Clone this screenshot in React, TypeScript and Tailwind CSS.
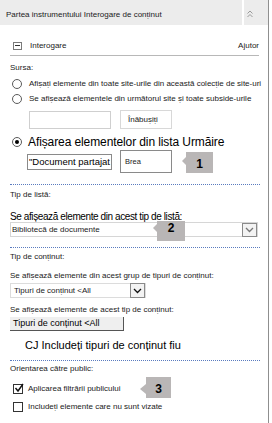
import React from "react";

function Radio({ checked }: { checked?: boolean }) {
  return (
    <span className="w-[10px] h-[10px] rounded-full border border-[#5a5a5a] bg-white flex items-center justify-center shrink-0">
      {checked && <span className="w-[4px] h-[4px] rounded-full bg-black" />}
    </span>
  );
}

function Check({ checked }: { checked?: boolean }) {
  return (
    <span className="relative block w-[10px] h-[10px] border border-[#333] bg-white shrink-0">
      {checked && (
        <svg className="absolute left-[0px] top-[-2px]" width="10" height="10" viewBox="0 0 10 10">
          <path d="M1.5 5 L4 8 L9 1" stroke="#111" strokeWidth="1.4" fill="none" />
        </svg>
      )}
    </span>
  );
}

function Chevron({ color }: { color: string }) {
  return (
    <svg width="9" height="6" viewBox="0 0 9 6">
      <path d="M1 1 L4.5 4.5 L8 1" stroke={color} strokeWidth="1.3" fill="none" />
    </svg>
  );
}

export default function App() {
  return (
    <div className="relative flex w-[272px] h-[423px] bg-white overflow-hidden font-['Liberation_Sans',Arial,sans-serif] text-[8px] leading-none text-[#1a1a1a]">
      <div className="w-[268px] flex flex-col shrink-0">
        {/* header */}
        <div className="flex h-[25px] bg-[#ececec] shrink-0">
          <div className="flex-1 flex items-center pl-[6px] pt-[4px] text-[#222]">
            Partea instrumentului Interogare de conținut
          </div>
          <div className="w-[26px] border-l-2 border-white flex items-start pl-[3px] pt-[10px]">
            <svg width="6" height="8" viewBox="0 0 6 8">
              <path d="M0.5 3.5 L3 1 L5.5 3.5 M0.5 7 L3 4.5 L5.5 7" stroke="#9a9a9a" fill="none" strokeWidth="1" />
            </svg>
          </div>
        </div>

        {/* Interogare */}
        <div className="mt-[11px] ml-[10px] mr-[9px] h-[20px] border-b border-[#b8b8b8] flex items-center">
          <div className="ml-[3px] w-[9px] h-[8px] border border-[#7a7a7a] flex items-center justify-center">
            <div className="w-[5px] h-px bg-[#333]" />
          </div>
          <span className="ml-[8px]">Interogare</span>
          <span className="ml-auto">Ajutor</span>
        </div>

        <div className="flex flex-col pl-[10px]">
          <div className="mt-[4px] h-[16px] flex items-center">Sursa:</div>
          <div className="h-[15px] flex items-center">
            <span className="ml-[2px]"><Radio /></span>
            <span className="ml-[7px]">Afișați elemente din toate site-urile din această colecție de site-uri</span>
          </div>
          <div className="h-[15px] flex items-center">
            <span className="ml-[2px]"><Radio /></span>
            <span className="ml-[7px]">Se afișează elementele din următorul site și toate subside-urile</span>
          </div>
          <div className="mt-[4px] h-[19px] flex items-end pl-[19px]">
            <div className="w-[82px] h-[18px] border border-[#cfcfcf] bg-white" />
            <div className="ml-[9px] w-[52px] h-[19px] border border-[#d8d8d8] flex items-center pl-[7px]">Înăbușiți</div>
          </div>
          <div className="mt-[5px] h-[16px] flex items-center">
            <span className="ml-[2px]"><Radio checked /></span>
            <span className="ml-[6px] text-[12px] text-black tracking-[-0.1px]">Afișarea elementelor din lista Urmăire</span>
          </div>
          <div className="h-[23px] flex items-center pl-[17px]">
            <div className="w-[85px] h-[16px] border border-[#8a8a8a] flex items-center pl-[1px] overflow-hidden whitespace-nowrap text-[9.5px] text-black">
              "Document partajat
            </div>
            <div className="ml-[8px] w-[52px] h-[23px] border border-[#8a8a8a] flex items-center pl-[4px] text-[7.5px]">Brea</div>
          </div>
          <div className="mt-[11px] mr-[8px] border-t border-dotted border-[#5a7bbf]" />
          <div className="mt-[3px] h-[14px] flex items-center">Tip de listă:</div>
          <div className="mt-[9px] h-[11px] flex items-center text-[10px] text-black tracking-[-0.4px]">
            Se afișează elemente din acest tip de listă:
          </div>
          <div className="h-[15px] mr-[10px] border border-[#d6d6d6] flex items-center">
            <span className="pl-[1px]">Bibliotecă de documente</span>
            <span className="ml-auto w-[15px] h-[14px] border border-[#8a8a8a] bg-[#f3f3f3] flex items-center justify-center">
              <Chevron color="#777" />
            </span>
          </div>
          <div className="mt-[10px] mr-[8px] border-t border-dotted border-[#5a7bbf]" />
          <div className="mt-[2px] h-[14px] flex items-center">Tip de conținut:</div>
          <div className="mt-[5px] h-[14px] flex items-center">Se afișează elemente din acest grup de tipuri de conținut:</div>
          <div className="w-[136px] h-[15px] border border-[#dcdcdc] flex items-center">
            <span className="pl-[3px]">Tipuri de conținut &lt;All</span>
            <span className="ml-auto w-[15px] h-[15px] border border-[#8a8a8a] bg-[#f3f3f3] flex items-center justify-center">
              <Chevron color="#111" />
            </span>
          </div>
          <div className="mt-[5px] h-[14px] flex items-center">Se afișează elemente de acest tip de conținut:</div>
          <div className="w-[114px] h-[14px] bg-[#efefef] border-r border-b border-[#555] flex items-center pl-[3px] text-[9px] text-black">
            Tipuri de conținut &lt;All
          </div>
          <div className="mt-[6px] h-[16px] flex items-center pl-[15px] text-[11px] text-black">
            CJ Includeți tipuri de conținut fiu
          </div>
          <div className="mt-[7px] mr-[8px] border-t border-dotted border-[#5a7bbf]" />
          <div className="mt-[1px] h-[14px] flex items-center">Orientarea către public:</div>
          <div className="mt-[5px] h-[16px] flex items-center">
            <span className="ml-[3px]"><Check checked /></span>
            <span className="ml-[5px]">Aplicarea filtrării publicului</span>
          </div>
          <div className="mt-[2px] h-[16px] flex items-center">
            <span className="ml-[3px]"><Check /></span>
            <span className="ml-[5px]">Includeți elemente care nu sunt vizate</span>
          </div>
        </div>
      </div>
      <div className="w-[1px] h-full bg-[#8f8f8f] shrink-0" />

      {/* callouts */}
      <div className="absolute left-[182px] top-[152px] w-[31px] h-[21px]">
        <div className="absolute left-[4px] top-0 w-[27px] h-[21px] bg-[#b9b6b6] flex items-center justify-center font-bold text-[12px] text-black pt-[2px]">1</div>
        <div className="absolute left-0 top-[4px] w-0 h-0 border-y-[5px] border-y-transparent border-r-[5px] border-r-[#b9b6b6]" />
      </div>
      <div className="absolute left-[153px] top-[221px] w-[32px] h-[20px]">
        <div className="absolute left-[4px] top-0 w-[28px] h-[20px] bg-[#b9b6b6] flex items-start justify-center font-bold text-[12px] text-black pt-[1px]">2</div>
        <div className="absolute left-0 top-[2px] w-0 h-0 border-y-[5px] border-y-transparent border-r-[5px] border-r-[#b9b6b6]" />
      </div>
      <div className="absolute left-[140px] top-[377px] w-[31px] h-[21px]">
        <div className="absolute left-[6px] top-0 w-[25px] h-[21px] bg-[#b9b6b6] flex items-center justify-center font-bold text-[12px] text-black pt-[2px]">3</div>
        <div className="absolute left-0 top-[7px] w-0 h-0 border-y-[5px] border-y-transparent border-r-[6px] border-r-[#b9b6b6]" />
      </div>
    </div>
  );
}
